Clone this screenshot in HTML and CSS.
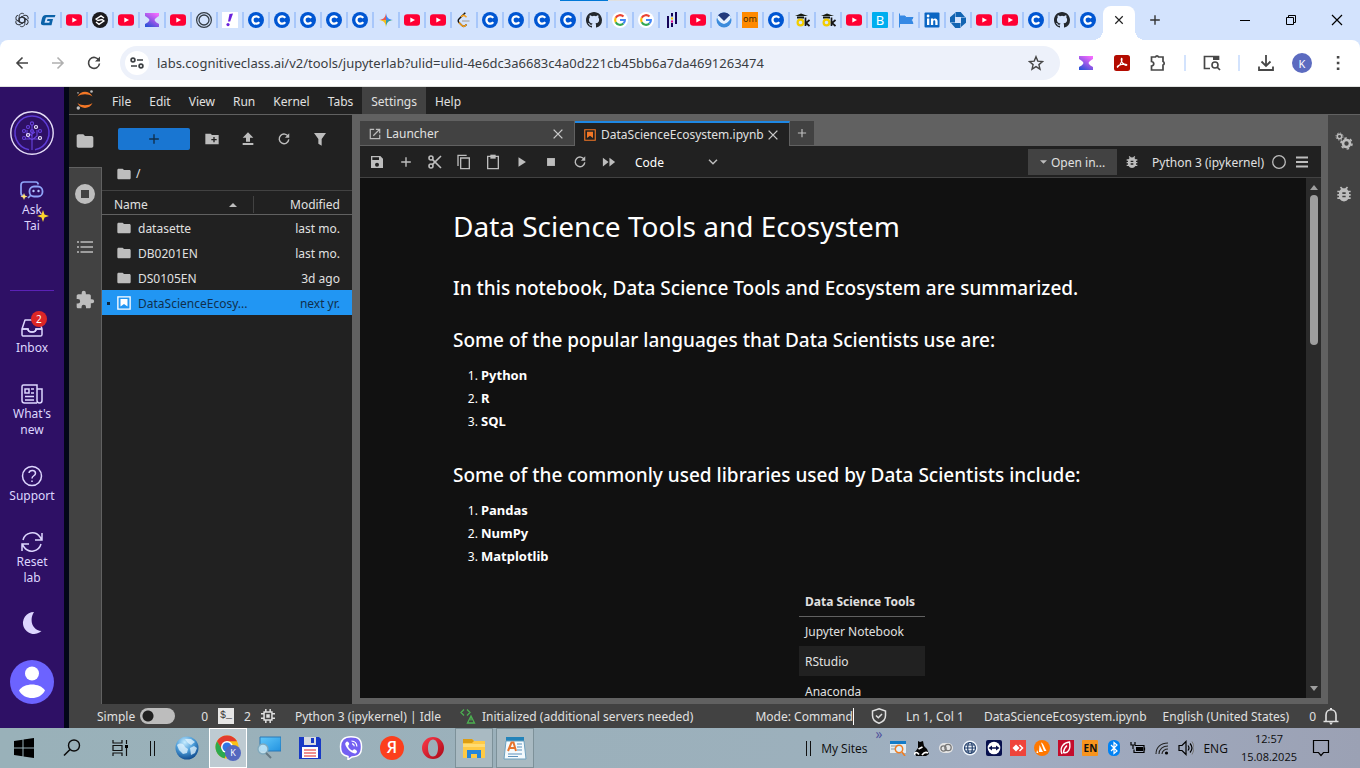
FILE: index.html
```html
<!DOCTYPE html>
<html lang="en">
<head>
<meta charset="utf-8">
<meta name="viewport" content="width=device-width, initial-scale=1">
<title>DataScienceEcosystem.ipynb - JupyterLab</title>
<link rel="stylesheet" href="styles.css">
</head>
<body>
<svg class="sprite" aria-hidden="true">
<defs>
<linearGradient id="hg" x1="0.8" y1="0" x2="0.2" y2="1"><stop offset="0" stop-color="#f66cff"/><stop offset=".5" stop-color="#9a58e8"/><stop offset="1" stop-color="#2b52d8"/></linearGradient>
<linearGradient id="sky" x1="0" y1="0" x2="1" y2="1"><stop offset="0" stop-color="#62c8fa"/><stop offset="1" stop-color="#2292e0"/></linearGradient>
<radialGradient id="globe" cx=".4" cy=".25" r=".8"><stop offset="0" stop-color="#c8edff"/><stop offset=".5" stop-color="#4a9bd8"/><stop offset="1" stop-color="#0b4488"/></radialGradient>
<linearGradient id="opera" x1="0" y1="0" x2="1" y2="1"><stop offset="0" stop-color="#ff3b4b"/><stop offset="1" stop-color="#a80716"/></linearGradient>
</defs>
<symbol id="openai" viewBox="0 0 16 16"><g fill="none" stroke="#30343b" stroke-width="1"><path id="petal" d="M5.200 9.600V4.200C5.200 1.500 8.500.3 10.200 2.300M5.200 6.300 8 4.700l3 1.700"/><use href="#petal" transform="rotate(60 8 8)"/><use href="#petal" transform="rotate(120 8 8)"/><use href="#petal" transform="rotate(180 8 8)"/><use href="#petal" transform="rotate(240 8 8)"/><use href="#petal" transform="rotate(300 8 8)"/></g></symbol>
<symbol id="gg" viewBox="0 0 16 16"><path d="M15.500 3H6C3.500 3 2.400 4.500 1.800 7L1 10.500c-.4 2 .5 2.700 2.500 2.700h8L13 7H7.500L7 9h2.700l-.4 1.800H4.500L5.700 6c.2-.5.4-.7 1-.7h8z" fill="#0b62a8"/></symbol>
<symbol id="yt" viewBox="0 0 16 16"><rect y="2.300" width="16" height="11.400" rx="3.200" fill="#ff0033"/><path d="M6.300 5.400v5.200L11 8z" fill="#fff"/></symbol>
<symbol id="ess" viewBox="0 0 16 16"><circle cx="8" cy="8" r="8" fill="#1c1b1e"/><path d="M12 6 9 3.800 4.200 7 6 8.500 10 7.500 11.800 9 7 12.300 4 10" fill="none" stroke="#fff" stroke-width="1.500"/></symbol>
<symbol id="hour" viewBox="0 0 16 16"><path d="M1 1h14v3c-1.500 1-4 2-4.500 4 .5 2 3 3 4.500 4v3H1v-3c1.500-1 4-2 4.500-4C5 6 2.500 5 1 4z" fill="url(#hg)"/></symbol>
<symbol id="ring" viewBox="0 0 16 16"><g fill="none" stroke="#333c45"><circle cx="8" cy="8" r="7.400" stroke-width="1.200"/><circle cx="8" cy="8" r="5" stroke-width="1.300"/></g></symbol>
<symbol id="bang" viewBox="0 0 16 16"><path d="M0 0h16v16H0z" fill="#fff"/><path d="m7.500 2 3.500-.5L8.200 9.500H6z" fill="#6b22dc"/><circle cx="6" cy="12.600" r="1.600" fill="#6b22dc"/></symbol>
<symbol id="cc" viewBox="0 0 16 16"><circle cx="8" cy="8" r="8" fill="#0056d2"/><path d="M11.200 5.900A3.700 3.700 0 1 0 11.200 10.100" fill="none" stroke="#fff" stroke-width="2.300"/></symbol>
<symbol id="gem" viewBox="0 0 16 16"><path d="M8 1c.5 4.500 2.500 6.500 7 7H8z" fill="#4285f4"/><path d="M8 1C7.500 5.500 5.500 7.500 1 8h7z" fill="#ea5a4d"/><path d="M1 8c4.500.5 6.500 2.500 7 7V8z" fill="#f4bc18"/><path d="M15 8c-4.500.5-6.500 2.500-7 7V8z" fill="#2ea779"/><path d="M8 2.500c.4 3.500 2 5 5.500 5.500-3.500.5-5.100 2-5.500 5z" fill="#4285f4" opacity=".5"/></symbol>
<symbol id="leet" viewBox="0 0 16 16"><path d="M9.300.8 3 7C2 8 2 9.500 3 10.500l3 3c1 1 2.500 1 3.500 0l1-1" fill="none" stroke="#151515" stroke-width="1.500"/><path d="m3 10.500 3 3c1 1 2.500 1 3.500 0l1-1M5 4.900l1-.8c1-.9 2.500-.8 3.500.2l1 1" fill="none" stroke="#f7a01b" stroke-width="1.500"/><path d="M6 9h7.500" stroke="#b3b3b3" stroke-width="1.500"/></symbol>
<symbol id="gh" viewBox="0 0 16 16"><path fill="#23282e" d="M8 0C3.580 0 0 3.580 0 8c0 3.540 2.290 6.530 5.470 7.590.4.070.55-.17.55-.38 0-.19-.01-.82-.01-1.490-2.010.37-2.530-.49-2.690-.94-.09-.23-.48-.94-.82-1.130-.28-.15-.68-.52-.01-.53.63-.01 1.080.58 1.230.82.720 1.210 1.870.87 2.330.66.070-.52.280-.87.510-1.070-1.780-.2-3.640-.89-3.640-3.950 0-.87.310-1.590.82-2.150-.08-.2-.36-1.020.08-2.120 0 0 .67-.21 2.200.82a7.420 7.420 0 0 1 4 0c1.530-1.040 2.200-.82 2.200-.82.440 1.100.16 1.920.08 2.120.51.560.82 1.270.82 2.150 0 3.070-1.870 3.750-3.650 3.950.29.250.54.730.54 1.480 0 1.070-.01 1.930-.01 2.200 0 .21.150.46.550.38A8 8 0 0 0 16 8c0-4.420-3.580-8-8-8z"/></symbol>
<symbol id="goog" viewBox="0 0 16 16"><circle cx="8" cy="8" r="8" fill="#fff"/><g fill="none" stroke-width="2.100"><path d="M11.500 4.500A4.900 4.900 0 0 0 3.700 5.800" stroke="#ea4335"/><path d="M3.700 5.800a4.900 4.900 0 0 0 0 4.400" stroke="#fbbc05"/><path d="M3.700 10.200a4.900 4.900 0 0 0 7.700 1.300" stroke="#34a853"/><path d="M11.300 11.600C12.500 10.500 13 9.500 12.900 8H8" stroke="#4285f4"/></g></symbol>
<symbol id="pandas" viewBox="0 0 16 16"><path d="M3 4h2v12H3zM7 1h2v3.500H7zm0 10h2v4H7zM11 0h2v12h-2z" fill="#150458"/><path d="M7 5.500h2v2H7z" fill="#ffca00"/><path d="M7 8.500h2v2H7z" fill="#e70488"/></symbol>
<symbol id="noaa" viewBox="0 0 16 16"><circle cx="8" cy="8" r="7.500" fill="#3c8cdc"/><path d="M2 3.500a7.500 7.500 0 0 1 12 0L8 10z" fill="#233a7c"/><path d="m1 5 1.500-1.500L8 9l5.500-5.500L15 5c-.5 3-3.500 6-7 7-3.500-1-6.500-4-7-7z" fill="#e7f2ff"/></symbol>
<symbol id="cap" viewBox="0 0 16 16"><path d="m1 4 6-2.500L14 4H1z" fill="#15190f"/><path d="M3 5.500h7" stroke="#15190f" stroke-width="2"/><circle cx="6.500" cy="10.500" r="2.900" fill="none" stroke="#f2cd00" stroke-width="2.200"/><path d="M11.500 5.500V14m4-6-3.500 3 3.500 3" fill="none" stroke="#161616" stroke-width="1.700"/></symbol>
<symbol id="flag" viewBox="0 0 16 16"><path d="M1.500 1.500v14M2 4h5l1 1.500h7L13.500 8l1.500 3.500H2z" fill="#3689e4" stroke="#3689e4"/></symbol>
<symbol id="linkedin" viewBox="0 0 16 16"><rect width="15" height="15" x=".5" y=".5" rx="1" fill="#0b66c3"/><path d="M3 6.500h2.300V13H3zm3.900 0h2.200v1c1-1.700 4.500-1.600 4.500 1.700V13h-2.300V9.500c0-1.600-2.100-1.500-2.100.1V13H6.900z" fill="#fff"/><circle cx="4.100" cy="4" r="1.400" fill="#fff"/></symbol>
<symbol id="chase" viewBox="0 0 16 16"><path d="M5.500 0h5.200l4.300 5H5.500zM16 5.500v5.200L11 15V5.500zM10.500 16H5.300L1 11h9.500zM0 10.500V5.300L5 1v9.500z" fill="#1264b2"/></symbol>
<symbol id="close" viewBox="0 0 16 16"><path d="m3 3 10 10M13 3 3 13" fill="none" stroke="currentColor" stroke-width="1.600"/></symbol>
<symbol id="plus" viewBox="0 0 16 16"><path d="M8 2.500v11M2.500 8h11" fill="none" stroke="currentColor" stroke-width="1.600"/></symbol>
<symbol id="back" viewBox="0 0 16 16"><path d="M14 8H3m5.500-5.500L3 8l5.500 5.500" fill="none" stroke="currentColor" stroke-width="1.600"/></symbol>
<symbol id="reload" viewBox="0 0 16 16"><path d="M13 5.500A5.500 5.500 0 1 0 13.500 8.500" fill="none" stroke="currentColor" stroke-width="1.600"/><path d="M14 1.500v5H9z" fill="currentColor"/></symbol>
<symbol id="folder" viewBox="0 0 24 24"><path d="M10 4H4c-1.100 0-2 .9-2 2v12c0 1.100.9 2 2 2h16c1.100 0 2-.9 2-2V8c0-1.100-.9-2-2-2h-8z" fill="currentColor"/></symbol>
<symbol id="bug" viewBox="0 0 24 24"><path fill="currentColor" d="M20 8h-2.810c-.45-.78-1.070-1.450-1.820-1.960L17 4.410 15.590 3l-2.170 2.170a6 6 0 0 0-2.830 0L8.410 3 7 4.410l1.620 1.630C7.880 6.550 7.260 7.220 6.810 8H4v2h2.090c-.05.330-.09.660-.09 1v1H4v2h2v1c0 .34.040.67.090 1H4v2h2.810a5.990 5.990 0 0 0 10.380 0H20v-2h-2.090c.050-.33.090-.66.090-1v-1h2v-2h-2v-1c0-.34-.04-.67-.09-1H20zm-6 8h-4v-2h4zm0-4h-4v-2h4z"/></symbol>
<symbol id="nbk" viewBox="0 0 16 16"><path d="M1 1h14v14H1z" fill="none" stroke="currentColor" stroke-width="1.500"/><path d="M4 3.500h8V12L8 9l-4 3z" fill="currentColor"/></symbol>
<symbol id="refresh2" viewBox="0 0 24 24"><path d="M3 10A9.500 9.500 0 0 1 20 7l2 3m0-7v7h-7M21 14A9.500 9.500 0 0 1 4 17l-2-3m0 7v-7h7" fill="none" stroke="currentColor" stroke-width="1.500"/></symbol>
<symbol id="mag" viewBox="0 0 20 20"><circle cx="12" cy="7.500" r="5.500" fill="none" stroke="currentColor" stroke-width="1.400"/><path d="m8 11.500-6 6" stroke="currentColor" stroke-width="1.600"/></symbol>
</svg>

<header class="browser">
  <div class="tabstrip">
    <div class="loadbar"></div>
    <nav class="tabs" aria-label="Browser tabs">
      <button class="tab" aria-label="ChatGPT"><svg><use href="#openai"/></svg></button>
      <button class="tab" aria-label="Tab"><svg><use href="#gg"/></svg></button>
      <button class="tab" aria-label="YouTube"><svg><use href="#yt"/></svg></button>
      <button class="tab" aria-label="Tab"><svg><use href="#ess"/></svg></button>
      <button class="tab" aria-label="YouTube"><svg><use href="#yt"/></svg></button>
      <button class="tab" aria-label="Tab"><svg><use href="#hour"/></svg></button>
      <button class="tab" aria-label="YouTube"><svg><use href="#yt"/></svg></button>
      <button class="tab" aria-label="Tab"><svg><use href="#ring"/></svg></button>
      <button class="tab" aria-label="Tab"><svg><use href="#bang"/></svg></button>
      <button class="tab" aria-label="Coursera"><svg><use href="#cc"/></svg></button>
      <button class="tab" aria-label="Coursera"><svg><use href="#cc"/></svg></button>
      <button class="tab" aria-label="Coursera"><svg><use href="#cc"/></svg></button>
      <button class="tab" aria-label="Coursera"><svg><use href="#cc"/></svg></button>
      <button class="tab" aria-label="Coursera"><svg><use href="#cc"/></svg></button>
      <button class="tab" aria-label="Gemini"><svg><use href="#gem"/></svg></button>
      <button class="tab" aria-label="YouTube"><svg><use href="#yt"/></svg></button>
      <button class="tab" aria-label="YouTube"><svg><use href="#yt"/></svg></button>
      <button class="tab" aria-label="LeetCode"><svg><use href="#leet"/></svg></button>
      <button class="tab" aria-label="Coursera"><svg><use href="#cc"/></svg></button>
      <button class="tab" aria-label="Coursera"><svg><use href="#cc"/></svg></button>
      <button class="tab" aria-label="Coursera"><svg><use href="#cc"/></svg></button>
      <button class="tab" aria-label="Coursera"><svg><use href="#cc"/></svg></button>
      <button class="tab" aria-label="GitHub"><svg><use href="#gh"/></svg></button>
      <button class="tab" aria-label="Google"><svg><use href="#goog"/></svg></button>
      <button class="tab" aria-label="Google"><svg><use href="#goog"/></svg></button>
      <button class="tab" aria-label="pandas"><svg><use href="#pandas"/></svg></button>
      <button class="tab" aria-label="YouTube"><svg><use href="#yt"/></svg></button>
      <button class="tab" aria-label="NOAA"><svg><use href="#noaa"/></svg></button>
      <button class="tab"><span class="fav fav-om">om</span></button>
      <button class="tab" aria-label="Coursera"><svg><use href="#cc"/></svg></button>
      <button class="tab" aria-label="Tab"><svg><use href="#cap"/></svg></button>
      <button class="tab" aria-label="Tab"><svg><use href="#cap"/></svg></button>
      <button class="tab" aria-label="YouTube"><svg><use href="#yt"/></svg></button>
      <button class="tab"><span class="fav fav-b">B</span></button>
      <button class="tab" aria-label="Tab"><svg><use href="#flag"/></svg></button>
      <button class="tab" aria-label="LinkedIn"><svg><use href="#linkedin"/></svg></button>
      <button class="tab" aria-label="Chase"><svg><use href="#chase"/></svg></button>
      <button class="tab" aria-label="YouTube"><svg><use href="#yt"/></svg></button>
      <button class="tab" aria-label="YouTube"><svg><use href="#yt"/></svg></button>
      <button class="tab" aria-label="Coursera"><svg><use href="#cc"/></svg></button>
      <button class="tab" aria-label="GitHub"><svg><use href="#gh"/></svg></button>
      <button class="tab tab-last" aria-label="Coursera"><svg><use href="#cc"/></svg></button>
    </nav>
    <button class="tab-active" aria-label="Close tab"><svg class="i12"><use href="#close"/></svg></button>
    <button class="newtab" aria-label="New tab"><svg class="i14"><use href="#plus"/></svg></button>
    <div class="winctl">
      <button aria-label="Minimize"><svg viewBox="0 0 12 12" class="i12"><path d="M1 6.500h10" stroke="#000"/></svg></button>
      <button aria-label="Restore"><svg viewBox="0 0 12 12" class="i12"><path d="M1.500 3.500h7v7h-7zM3.500 3.500v-2h7v7h-2" fill="none" stroke="#000"/></svg></button>
      <button aria-label="Close"><svg viewBox="0 0 12 12" class="i12"><path d="m1 1 10 10M11 1 1 11" stroke="#000" stroke-width="1.200"/></svg></button>
    </div>
  </div>
  <div class="toolbar">
    <div class="navbtns">
      <button aria-label="Back"><svg class="i16"><use href="#back"/></svg></button>
      <button class="dim flip" aria-label="Forward"><svg class="i16"><use href="#back"/></svg></button>
      <button aria-label="Reload"><svg class="i16"><use href="#reload"/></svg></button>
    </div>
    <div class="omnibox">
      <button class="siteinfo" aria-label="Site information"><svg viewBox="0 0 16 16" class="i16"><g fill="none" stroke="#3c4043" stroke-width="1.700"><circle cx="4" cy="5" r="1.900"/><path d="M8 5h6M2 11h6"/><circle cx="12" cy="11" r="1.900"/></g></svg></button>
      <input class="url" type="text" aria-label="Address" value="labs.cognitiveclass.ai/v2/tools/jupyterlab?ulid=ulid-4e6dc3a6683c4a0d221cb45bb6a7da4691263474">
      <button class="star" aria-label="Bookmark"><svg viewBox="0 0 16 16" class="i16"><path d="m8 1.700 1.800 4.400 4.700.4-3.600 3.100 1.100 4.600L8 11.700l-4 2.500 1.100-4.600L1.500 6.500l4.700-.4z" fill="none" stroke="#474747" stroke-width="1.400"/></svg></button>
    </div>
    <div class="exts">
      <button aria-label="Extension"><svg class="i16"><use href="#hour"/></svg></button>
      <button aria-label="Acrobat"><svg viewBox="0 0 16 16" class="i16"><rect width="16" height="16" rx="2.500" fill="#b30b00"/><path d="M7.500 3.200c1.500 0-.2 6-4 9-1.300-1 3-3.400 8.200-3 2.700.3.300 2.400-2-.2-1.800-1.700-2.800-4.500-2.200-5.800z" fill="none" stroke="#fff" stroke-width="1.100"/></svg></button>
      <button aria-label="Extensions"><svg viewBox="0 0 18 18" class="i18"><path d="M2.500 3h4c.5-1.500 2.500-1.500 3 0H14v4.500c1.600.5 1.600 3 0 3.500v5H2.500v-4c3-.5 3-4 0-4.500z" fill="none" stroke="#474747" stroke-width="1.700"/></svg></button>
      <i class="vline"></i>
      <button aria-label="Search page"><svg viewBox="0 0 18 18" class="i18"><path d="M7 14.500H1.500v-12h14V6" fill="none" stroke="#474747" stroke-width="1.700"/><path d="M10 2h6v4h-6z" fill="#474747"/><circle cx="12" cy="11" r="3" fill="none" stroke="#474747" stroke-width="1.600"/><path d="m14 13 3 3" stroke="#474747" stroke-width="1.700"/></svg></button>
      <i class="vline"></i>
      <button aria-label="Downloads"><svg viewBox="0 0 18 18" class="i18"><path d="M9 1v11M4.500 7.500 9 12l4.500-4.500M2 12.500V16h14v-3.500" fill="none" stroke="#474747" stroke-width="1.800"/></svg></button>
      <button class="profile">K</button>
      <button class="kebab" aria-label="Menu"><svg viewBox="0 0 4 16" class="dots"><path d="M.8 1h2.600v2.600H.8zM.8 6.700h2.600v2.600H.8zM.8 12.400h2.600V15H.8z" fill="#474747"/></svg></button>
    </div>
  </div>
</header>

<main class="page">
  <nav class="rail" aria-label="Lab navigation">
    <a href="#" class="logo" aria-label="Home"><svg viewBox="0 0 44 44" class="i44"><g fill="none"><circle cx="22" cy="22" r="21.200" stroke="#e6def8" stroke-width="1.400"/><path d="M19 38.700a17 17 0 1 1 6 0" stroke="#5d3bd6" stroke-width="1.500"/><g stroke="#6842df" stroke-width="1.100"><path d="M22 39V14M22 29l-5-4v-6M22 29l5-4v-6M22 25l-3-3M22 23l3-2M20 28h-5M24 28h5"/><circle cx="22" cy="12.500" r="1.600"/><circle cx="18" cy="16" r="1.500"/><circle cx="14" cy="20" r="1.500"/><circle cx="30" cy="20" r="1.500"/><circle cx="14" cy="27" r="1.500"/><circle cx="22" cy="20" r="1.500"/></g><g stroke="#eee7ff" stroke-width="1.200"><circle cx="26" cy="16" r="1.500"/><circle cx="18" cy="24" r="1.500"/><circle cx="30" cy="27" r="1.500"/></g></g></svg></a>
    <a href="#" class="rail-item ask"><svg viewBox="0 0 24 20" class="tai"><path d="M3 15.500c-1.500 0-2-1-2-2.500V5c0-2 1-3 3-3h12c1.500 0 2 .8 2.300 2.500M8 18l3-3" fill="none" stroke="#8fa4f8" stroke-width="1.700"/><rect x="9.500" y="6.500" width="13" height="10" rx="4.500" fill="none" stroke="#8fa4f8" stroke-width="1.800"/><circle cx="13.500" cy="11" r="1.200" fill="#b9c7ff"/><circle cx="18.500" cy="11" r="1.200" fill="#b9c7ff"/><path d="m4 13 1 2.500 2.500 1-2.500 1-1 2.500-1-2.500-2.500-1L3 15.500z" fill="#ffe478"/></svg><span>Ask<br>Tai</span><svg viewBox="0 0 12 12" class="spark"><path d="m6 0 1.500 4.500L12 6 7.500 7.500 6 12 4.500 7.500 0 6l4.500-1.500z" fill="#fcd62b"/></svg></a>
    <hr class="rail-rule">
    <a href="#" class="rail-item"><svg viewBox="0 0 24 24" class="i24"><path d="M2 13 5 4h14l3 9v5.500c0 1-.6 1.600-1.600 1.600H3.600c-1 0-1.600-.6-1.600-1.600zh6c0 4 8 4 8 0h6" fill="none" stroke="currentColor" stroke-width="1.500" stroke-linejoin="round"/><path d="M2 13h6c0 4 8 4 8 0h6" fill="none" stroke="currentColor" stroke-width="1.500"/></svg><span>Inbox</span><b class="badge">2</b></a>
    <a href="#" class="rail-item"><svg viewBox="0 0 24 24" class="i24"><path d="M17 21H4.500C3 21 2 20 2 18.500v-14C2 3.600 2.600 3 3.500 3H17v15.500c0 1.600.8 2.500 2.500 2.500S22 20 22 18.500V7h-5M5 7h4v4H5zM11 7h3m-3 4h3m-9 3.500h9M5 18h9" fill="none" stroke="currentColor" stroke-width="1.500"/></svg><span>What's<br>new</span></a>
    <a href="#" class="rail-item"><svg viewBox="0 0 24 24" class="i24"><g fill="none" stroke="currentColor" stroke-width="1.500"><circle cx="12" cy="12" r="9.500"/><path d="M9 9c.5-3.500 6.500-3.300 6.500.2C15.500 12 12 11.500 12 14.500"/><path d="M12 16.500V18"/></g></svg><span>Support</span></a>
    <a href="#" class="rail-item"><svg class="i24"><use href="#refresh2"/></svg><span>Reset<br>lab</span></a>
    <button class="moon" aria-label="Dark mode"><svg viewBox="0 0 20 22" class="moonpic"><path d="M12 0a11 11 0 1 0 7.500 19C11 18.500 6.500 9 12 0z" fill="#ddd6fe"/></svg></button>
    <button class="avatar" aria-label="Account"><svg viewBox="0 0 44 44" class="i44"><circle cx="22" cy="22" r="22" fill="#6c63ff"/><circle cx="22" cy="13.500" r="7" fill="#fff"/><path d="M9 30.500c5-8 21-8 26 0-5 10-21 10-26 0z" fill="#fff"/></svg></button>
  </nav>

  <section class="lab">
    <nav class="menubar" aria-label="Main menu">
      <svg viewBox="0 0 18 20" class="jup"><path d="M1.500 6.500c3-6.500 12-6.500 15 0-4-3-11-3-15 0zM1.500 13c4 3 11 3 15 0-3 6.500-12 6.500-15 0z" fill="#f37726"/><circle cx="2.300" cy="18" r="1.700" fill="#bdbdbd"/><circle cx="15.500" cy="1.500" r="1.300" fill="#bdbdbd"/><circle cx="2" cy="2.800" r=".9" fill="#9e9e9e"/></svg>
      <button>File</button><button>Edit</button><button>View</button><button>Run</button><button>Kernel</button><button>Tabs</button><button class="on">Settings</button><button>Help</button>
    </nav>
    <div class="work">
      <div class="side side-left">
        <button class="on" aria-label="File browser"><svg class="i20"><use href="#folder"/></svg></button>
        <button aria-label="Running terminals and kernels"><svg viewBox="0 0 20 20" class="i20"><path d="M10 0a10 10 0 1 0 0 20 10 10 0 0 0 0-20zM6 6h8v8H6z" fill="currentColor" fill-rule="evenodd"/></svg></button>
        <button aria-label="Table of contents"><svg viewBox="0 0 20 20" class="i20"><path d="M5.500 5H18M5.500 10H18M5.500 15H18M2 5h2m-2 5h2m-2 5h2" stroke="currentColor" stroke-width="1.600"/></svg></button>
        <button aria-label="Extension manager"><svg viewBox="0 0 24 24" class="i20"><path fill="currentColor" d="M20.500 11H19V7c0-1.100-.9-2-2-2h-4V3.500a2.500 2.500 0 0 0-5 0V5H4c-1.100 0-2 .9-2 2v3.800h1.500a2.700 2.700 0 0 1 0 5.400H2V20c0 1.100.9 2 2 2h3.800v-1.500a2.700 2.700 0 0 1 5.400 0V22H17c1.100 0 2-.9 2-2v-4h1.500a2.500 2.500 0 0 0 0-5z"/></svg></button>
      </div>

      <aside class="files">
        <div class="file-tools">
          <button class="launch" aria-label="New launcher"><svg class="i14"><use href="#plus"/></svg></button>
          <button aria-label="New folder"><svg viewBox="0 0 24 24" class="i16"><path fill="currentColor" fill-rule="evenodd" d="M22 6H12l-2-2H2v16h20zM14 9h2v3h3v2h-3v3h-2v-3h-3v-2h3z"/></svg></button>
          <button aria-label="Upload"><svg viewBox="0 0 24 24" class="i16"><path d="M9 16h6v-6h5l-8-8-8 8h5zM4 18h16v3H4z" fill="currentColor"/></svg></button>
          <button aria-label="Refresh"><svg class="i14"><use href="#reload"/></svg></button>
          <button aria-label="Filter"><svg viewBox="0 0 24 24" class="i16"><path d="M3 3h18l-6.500 9v10l-5-3v-7z" fill="currentColor"/></svg></button>
        </div>
        <div class="crumbs"><svg class="i16"><use href="#folder"/></svg><a href="#">/</a></div>
        <table class="listing">
          <thead><tr><th><div class="name-head">Name<svg viewBox="0 0 8 4" class="caret"><path d="M0 4h8L4 0z" fill="#bdbdbd"/></svg></div></th><th class="mod">Modified</th></tr></thead>
          <tbody>
            <tr><td><div class="fname"><svg class="i16"><use href="#folder"/></svg>datasette</div></td><td class="mod">last mo.</td></tr>
            <tr><td><div class="fname"><svg class="i16"><use href="#folder"/></svg>DB0201EN</div></td><td class="mod">last mo.</td></tr>
            <tr><td><div class="fname"><svg class="i16"><use href="#folder"/></svg>DS0105EN</div></td><td class="mod">3d ago</td></tr>
            <tr class="sel"><td><div class="fname"><i class="dot"></i><svg class="i14 nbwhite"><use href="#nbk"/></svg>DataScienceEcosy...</div></td><td class="mod">next yr.</td></tr>
          </tbody>
        </table>
      </aside>

      <section class="dock">
        <div class="docktabs">
          <div class="dtab"><svg viewBox="0 0 14 14" class="i12"><path d="M6 1.500H1.500v11h11V8M8 1.500h4.500V6M12.500 1.500 5 9" fill="none" stroke="#bdbdbd" stroke-width="1.400"/></svg><span>Launcher</span><button aria-label="Close Launcher"><svg class="i14"><use href="#close"/></svg></button></div>
          <div class="dtab cur"><svg class="i12 orange"><use href="#nbk"/></svg><span>DataScienceEcosystem.ipynb</span><button aria-label="Close notebook"><svg class="i14"><use href="#close"/></svg></button></div>
          <button class="addtab" aria-label="New tab"><svg class="i12"><use href="#plus"/></svg></button>
        </div>
        <div class="nbtools">
          <button aria-label="Save"><svg viewBox="0 0 24 24" class="i16"><path fill="currentColor" fill-rule="evenodd" d="M17 3H3v18h18V7zM5 5h10v4H5zm7 8a3 3 0 1 1 0 6 3 3 0 0 1 0-6z"/></svg></button>
          <button aria-label="Insert cell"><svg class="i14"><use href="#plus"/></svg></button>
          <button aria-label="Cut"><svg viewBox="0 0 24 24" class="i16"><g fill="none" stroke="currentColor" stroke-width="2.400"><circle cx="6" cy="6" r="3"/><circle cx="6" cy="18" r="3"/><path d="m8 8 13 13M8 16 21 3"/></g></svg></button>
          <button aria-label="Copy"><svg viewBox="0 0 24 24" class="i16"><path d="M16 2H3v16M7 6h13v16H7z" fill="none" stroke="currentColor" stroke-width="2"/></svg></button>
          <button aria-label="Paste"><svg viewBox="0 0 24 24" class="i16"><path d="M4 3.500h16V22H4z" fill="none" stroke="currentColor" stroke-width="2"/><path d="M8 1h8v6H8z" fill="currentColor"/></svg></button>
          <button aria-label="Run"><svg viewBox="0 0 16 16" class="i14"><path d="M4 2.500v11L12.500 8z" fill="currentColor"/></svg></button>
          <button aria-label="Stop"><svg viewBox="0 0 16 16" class="i14"><path d="M3.500 3.500h9v9h-9z" fill="currentColor"/></svg></button>
          <button aria-label="Restart"><svg class="i14"><use href="#reload"/></svg></button>
          <button aria-label="Restart and run all"><svg viewBox="0 0 16 16" class="i14"><path d="M1 3v10l6.500-5zm7.500 0v10L15 8z" fill="currentColor"/></svg></button>
          <div class="cellkind"><select aria-label="Cell type"><option>Code</option><option>Markdown</option></select><svg viewBox="0 0 10 6" class="chev"><path d="m1 .8 4 4 4-4" fill="none" stroke="#bdbdbd" stroke-width="1.500"/></svg></div>
          <span class="grow"></span>
          <button class="openin"><svg viewBox="0 0 8 4" class="tri"><path d="M0 0h8L4 4z" fill="#bdbdbd"/></svg>Open in...</button>
          <button aria-label="Debugger"><svg class="i16"><use href="#bug"/></svg></button>
          <button class="kernel">Python 3 (ipykernel)</button>
          <button class="kstate" aria-label="Kernel status"><svg viewBox="0 0 14 14" class="i14"><circle cx="7" cy="7" r="6.300" fill="none" stroke="currentColor" stroke-width="1.300"/></svg></button>
          <button class="burger" aria-label="More"><svg viewBox="0 0 12 12" class="i12"><path d="M0 1.500h12M0 6h12M0 10.500h12" stroke="currentColor" stroke-width="2.200"/></svg></button>
        </div>
        <div class="nb">
          <article class="doc">
            <h1>Data Science Tools and Ecosystem</h1>
            <h3 class="intro">In this notebook, Data Science Tools and Ecosystem are summarized.</h3>
            <h3>Some of the popular languages that Data Scientists use are:</h3>
            <ol><li><b>Python</b></li><li><b>R</b></li><li><b>SQL</b></li></ol>
            <h3 class="libs">Some of the commonly used libraries used by Data Scientists include:</h3>
            <ol><li><b>Pandas</b></li><li><b>NumPy</b></li><li><b>Matplotlib</b></li></ol>
            <table class="dst">
              <thead><tr><th>Data Science Tools</th></tr></thead>
              <tbody><tr><td>Jupyter Notebook</td></tr><tr><td>RStudio</td></tr><tr><td>Anaconda</td></tr></tbody>
            </table>
          </article>
          <div class="scroll"><svg viewBox="0 0 8 5" class="sarrow"><path d="M0 5h8L4 0z" fill="#9e9e9e"/></svg><i class="thumb"></i><svg viewBox="0 0 8 5" class="sarrow end"><path d="M0 0h8L4 5z" fill="#9e9e9e"/></svg></div>
        </div>
      </section>

      <div class="side side-right">
        <button aria-label="Property inspector"><svg viewBox="0 0 18 18" class="i18"><g fill="none" stroke="currentColor"><circle cx="4.500" cy="4.500" r="2.200" stroke-width="1.500"/><circle cx="4.500" cy="4.500" r="3.500" stroke-width="1" stroke-dasharray="1.400 1.350"/><circle cx="11.500" cy="11.500" r="3.500" stroke-width="2.600"/><circle cx="11.500" cy="11.500" r="5.500" stroke-width="1.600" stroke-dasharray="2.500 3.260"/></g></svg></button>
        <button aria-label="Debugger panel"><svg class="i20"><use href="#bug"/></svg></button>
      </div>
    </div>
    <footer class="status">
      <label class="simple">Simple<input type="checkbox" role="switch"></label>
      <button class="terms">0<span class="term">$_</span>2<svg viewBox="0 0 16 16" class="i14"><path d="M3.500 3.500h9v9h-9zM5.500 0v3M10.500 0v3M5.500 13v3M10.500 13v3M0 5.500h3M0 10.500h3M13 5.500h3M13 10.500h3" fill="none" stroke="#e0e0e0" stroke-width="1.700"/><path d="M6 6h4v4H6z" fill="#e0e0e0"/></svg></button>
      <button class="kidle">Python 3 (ipykernel) | Idle</button>
      <span class="lsp"><svg viewBox="0 0 16 16" class="i16"><path d="M4 1.500 1 4.500l3 3M7 1.500l3 3-3 3M7.500 15 11 8l3.500 7zM11 10.500v2" fill="none" stroke="#4caf50" stroke-width="1.300"/></svg>Initialized (additional servers needed)</span>
      <span class="grow"></span>
      <span class="mode">Mode: Command</span>
      <svg viewBox="0 0 16 16" class="i16 shield"><path d="M8 .8 14.500 3v4.500c0 3.500-2.500 6.500-6.500 7.700C4 14 1.500 11 1.500 7.500V3z" fill="none" stroke="#e0e0e0" stroke-width="1.500"/><path d="m5 7.500 2.300 2.300L11 6" fill="none" stroke="#e0e0e0" stroke-width="1.500"/></svg>
      <button class="cursor">Ln 1, Col 1</button>
      <span>DataScienceEcosystem.ipynb</span>
      <button>English (United States)</button>
      <button class="bell">0<svg viewBox="0 0 18 18" class="i18"><path d="M1.500 14.500h15M4 14V8c0-7 10-7 10 0v6" fill="none" stroke="#e0e0e0" stroke-width="1.600"/><path d="M7 15.500h4L9 18zM8 1h2v2H8z" fill="#e0e0e0"/></svg></button>
    </footer>
  </section>
</main>

<footer class="taskbar">
  <div class="tb-main">
    <button aria-label="Start"><svg viewBox="0 0 20 20" class="i20"><path d="M0 3l8.500-1.200v7.700H0zM9.500 1.600 20 0v9.500H9.500zM0 10.500h8.500v7.700L0 17zM9.500 10.500H20V20L9.500 18.400z"/></svg></button>
    <button aria-label="Search"><svg class="i20"><use href="#mag"/></svg></button>
    <button aria-label="Task view"><svg viewBox="0 0 18 18" class="i18"><path d="M2 1v3h9V1M2 17v-3h9v3M2 6.500h9v5H2zM15.500 1v4M15.500 9v8" fill="none" stroke="#111" stroke-width="1.200"/><path d="M14 6h3v3h-3z"/></svg></button>
    <i class="bars"></i>
  </div>
  <div class="tb-apps">
    <button aria-label="Browser"><svg viewBox="0 0 24 24" class="i24"><circle cx="12" cy="12" r="11.500" fill="url(#globe)"/><path d="M2 9c4-3 7-1 8 2l3 2-1 4-4 1-4-4zM10 3l6 0 4 3-4 3-3-2zM15 12l4-2 3 2-2 5-4 2z" fill="#e6f6ff" opacity=".75"/></svg></button>
    <button class="open active" aria-label="Chrome"><svg viewBox="0 0 26 26" class="i26"><circle cx="12" cy="12" r="11.500" fill="#fbc116"/><path d="M2 6.300A11.500 11.500 0 0 1 22 6.300H12L7 15z" fill="#e33b2e"/><path d="M2 6.300 7.500 15l5 2-3 6.300A11.500 11.500 0 0 1 2 6.300z" fill="#2da94f"/><circle cx="12" cy="12" r="6" fill="#fff"/><circle cx="12" cy="12" r="4.500" fill="#3275e4"/></svg><span class="kbadge">K</span></button>
    <button aria-label="Remote desktop"><svg viewBox="0 0 24 24" class="i24"><path d="M3 1h21v14H3z" fill="url(#sky)" stroke="#2b79b5"/><circle cx="6" cy="13" r="5" fill="#c9e7f5" fill-opacity=".85" stroke="#7fa9bd" stroke-width="1.300"/><path d="m9 17 5 5" stroke="#657983" stroke-width="2"/></svg></button>
    <button aria-label="Total Commander"><svg viewBox="0 0 24 24" class="i24"><path d="M1 1h20l2 2v20H1z" fill="#1839c5"/><path d="M6 1h12v8H6z" fill="#d7dbe2"/><path d="M13 2h3v5h-3z" fill="#1839c5"/><path d="M4 11h16v11H4z" fill="#fff"/><path d="M6 14h12M6 17h12M6 20h12" stroke="#df2121"/></svg></button>
    <button aria-label="Viber"><svg viewBox="0 0 24 24" class="i24"><path d="M12 .8c8 0 10.500 3 10.500 10S20 20.500 13 21l-4 2.700V20.500C3 19 1.500 16.500 1.500 10.800S4 .8 12 .8z" fill="#7360f2" stroke="#fff" stroke-width="1.500"/><path d="M8.300 5.500c1.200.5 2.200 2 1.900 2.800-.3.700-1.200 1-1 1.900.5 2 2.200 3.600 4 4.200.9.200 1.200-1.200 2-1.200 1 .1 2.700 1.400 2.800 2.200 0 .9-1.300 2.100-2.300 2.100C11.500 16.600 7 12 6.200 8c-.1-1 1.200-2.600 2.100-2.500z" fill="#fff"/><path d="M12.500 5c3.300.2 5.200 2.200 5.400 5.500M13 7.700c1.400.2 2.200 1.100 2.300 2.600" fill="none" stroke="#fff" stroke-width="1.200"/></svg></button>
    <button><span class="yandex">Я</span></button>
    <button aria-label="Opera"><svg viewBox="0 0 24 24" class="i24"><path fill="url(#opera)" fill-rule="evenodd" d="M12 1a11 11 0 1 0 0 22 11 11 0 0 0 0-22zm0 2.500c3 0 5 3.500 5 8.500s-2 8.500-5 8.500S7 17 7 12s2-8.500 5-8.500z"/></svg></button>
    <button class="open" aria-label="File Explorer"><svg viewBox="0 0 24 24" class="i24"><path d="M1 3h9l2 2h11v17H1z" fill="#ffca45"/><path d="M1 3h9l2 2-2 2H1z" fill="#dd9d12"/><path d="M5 22v-8h14v8h-4v-4H9v4z" fill="#2686dc"/><path d="M1 8h22v3H1z" fill="#ffdc74"/></svg></button>
    <button class="open" aria-label="WordPad"><svg viewBox="0 0 24 24" class="i24"><path d="M3 1h18v5H3z" fill="#2383b9"/><path d="M3 5h18l2 18H1z" fill="#f4fafd" stroke="#6fa1bf"/><path d="M5 15 8.500 6.500h2L13 15M6.500 12h5" fill="none" stroke="#e8742c" stroke-width="2"/><path d="M14 8h5M14 11h5M14 14h5M5 18h14M5 20.500h10" stroke="#5d92bd"/></svg></button>
  </div>
  <span class="grow"></span>
  <div class="sites"><i class="bars"></i><span>My Sites</span><span class="more">»</span></div>
  <div class="tray">
    <button aria-label="Search tool"><svg viewBox="0 0 16 16" class="i16"><path d="M0 1h16v12H0z" fill="#e4ebef"/><path d="M0 1h16v3H0z" fill="#157bc7"/><path d="M1 6h7M1 9h5" stroke="#8999a4"/><circle cx="9" cy="9" r="3.700" fill="#dff1ff" stroke="#ee7d23" stroke-width="1.500"/><path d="m12 12 3 4" stroke="#ee7d23" stroke-width="1.600"/></svg></button>
    <button aria-label="Tray app"><svg viewBox="0 0 16 16" class="i16"><path d="m4 1 2 1 3-1 1 5 3 3 2 5-3 2H2l-1-4 3-4z" fill="#050505"/><path d="M0 14.500q2-4 5 0M8 15q3-4 6-2M4.500 9l4-2" fill="none" stroke="#fff" stroke-width="1.700"/></svg></button>
    <button aria-label="Creative Cloud"><svg viewBox="0 0 16 16" class="i16"><rect x="1" y="3" width="14" height="10" rx="5" fill="#e5e5e5"/><g fill="none" stroke="#777" stroke-width="1.300"><circle cx="5.500" cy="8.500" r="2.600"/><circle cx="10" cy="7.500" r="3.200"/></g></svg></button>
    <button aria-label="Tray globe"><svg viewBox="0 0 16 16" class="i16"><circle cx="8" cy="8" r="7.500" fill="#f0f5fb"/><g fill="none" stroke="#24416d" stroke-width="1.200"><circle cx="8" cy="8" r="5.500"/><ellipse cx="8" cy="8" rx="2.300" ry="5.500"/><path d="M2.500 8h11M4 5h8M4 11h8"/></g></svg></button>
    <button aria-label="TeamViewer"><svg viewBox="0 0 16 16" class="i16"><rect width="16" height="16" rx="2" fill="#07104d"/><circle cx="8" cy="8" r="6.300" fill="#fff"/><path d="M2.500 8 6 5.500v1.700h4V5.500L13.500 8 10 10.500V8.800H6v1.700z" fill="#07104d"/></svg></button>
    <button aria-label="AnyDesk"><svg viewBox="0 0 16 16" class="i16"><path d="M0 0h16v16H0z" fill="#ef443b"/><path d="M6 4.500 9.500 8 6 11.500 2.500 8z" fill="#fff"/><path d="m9.500 5 3 3-3 3" fill="none" stroke="#fff" stroke-width="1.500"/></svg></button>
    <button aria-label="Avast"><svg viewBox="0 0 16 16" class="i16"><circle cx="8" cy="8" r="8" fill="#ff7800"/><path d="M7 2.500c2 0 3 4 5.500 8.500H10zM5.500 5l3.500 7H5zM3 10l1.500 3H2.500z" fill="#fff"/></svg></button>
    <button aria-label="Tray leaf"><svg viewBox="0 0 16 16" class="i16"><path d="M0 0h16v16H0z" fill="#c40c2c"/><path d="M4 14C1 7 6 2.500 11.500 2 13 9 10 14 5.500 12.500c0-3 1.500-5 3.500-7" fill="none" stroke="#fff" stroke-width="1.400"/></svg></button>
    <button><span class="en">EN</span></button>
    <button aria-label="Bluetooth"><svg viewBox="0 0 16 16" class="i16"><rect x="2" width="12" height="16" rx="5.500" fill="#0082f3"/><path d="m5 5 6 6-3 2.500v-11L11 5l-6 6" fill="none" stroke="#fff" stroke-width="1.200"/></svg></button>
    <button aria-label="Battery"><svg viewBox="0 0 16 16" class="i16"><path d="M5 5.500h9v7H4v-3M14.500 7.500v3M1 2v3h4V2M3 5v4" fill="none" stroke="#000" stroke-width="1.200"/><path d="M6 7h7v4H6z"/></svg></button>
    <button aria-label="Wi-Fi"><svg viewBox="0 0 16 16" class="i16"><path d="M2 14C2 7 7 3 14 3M5 14c0-5 4-8 9-8M8 14c0-3 3-5 6-5" fill="none" stroke="#222" stroke-width="1.100"/><circle cx="12.500" cy="13" r="1.600"/></svg></button>
    <button aria-label="Volume"><svg viewBox="0 0 16 16" class="i16"><path d="M1 5.500h3l4-4v13l-4-4H1zM10 5.500q2 2.500 0 5M12 3.500q4 4.500 0 9" fill="none" stroke="#000" stroke-width="1.200"/><path d="M14 1.500q4 6 0 13" fill="none" stroke="#777"/></svg></button>
  </div>
  <button class="lang">ENG</button>
  <button class="clock">12:57<br>15.08.2025</button>
  <button class="note" aria-label="Notifications"><svg viewBox="0 0 18 18" class="i18"><path d="M1.500 1.500h15v12h-5L9 16.500l-2.500-3h-5z" fill="none" stroke="#000" stroke-width="1.200"/></svg></button>
</footer>
</body>
</html>
```
FILE: styles.css
```css
* { box-sizing: border-box; }
html, body { margin: 0; height: 100%; }
body {
  display: flex;
  flex-direction: column;
  overflow: hidden;
  font-family: "Noto Sans", "Open Sans", sans-serif;
  font-size: 12px;
  background: #212121;
}
button, input, select { font: inherit; color: inherit; }
button {
  display: flex;
  align-items: center;
  justify-content: center;
  flex: none;
  padding: 0;
  border: 0;
  background: none;
  white-space: nowrap;
}
a { color: inherit; text-decoration: none; }
svg { display: block; flex: none; }
.sprite { position: absolute; width: 0; height: 0; }
.i12 { width: 12px; height: 12px; }
.i14 { width: 14px; height: 14px; }
.i16 { width: 16px; height: 16px; }
.i18 { width: 18px; height: 18px; }
.i20 { width: 20px; height: 20px; }
.i24 { width: 24px; height: 24px; }
.i26 { width: 26px; height: 26px; }
.i44 { width: 44px; height: 44px; }
.grow { flex: 1; }

/* Browser chrome */
.browser { flex: none; background: #d3e3fd; border-bottom: 1px solid #e1e3e1; }
.tabstrip { position: relative; display: flex; height: 40px; padding-left: 9px; }
.loadbar {
  position: absolute;
  top: 0;
  left: 560px;
  width: 242px;
  height: 1px;
  background: linear-gradient(to right, #0078d7 48px, #dfdfdf 48px);
}
.tabs { display: flex; align-items: center; }
.tab { position: relative; width: 26px; height: 20px; }
.tab svg { width: 16px; height: 16px; }
.tab::after {
  content: "";
  position: absolute;
  right: -1px;
  top: 2px;
  width: 2px;
  height: 16px;
  background: #a8c7fa;
}
.tab-last::after { display: none; }
.fav { width: 16px; height: 16px; line-height: 14px; text-align: center; }
.fav-om { background: #ff8a00; color: #3e2a05; font-size: 9px; }
.fav-b { background: #00aeef; color: #fff; font-size: 13px; line-height: 16px; border-radius: 1px; }
.tab-active {
  position: relative;
  width: 32px;
  height: 34px;
  margin: 6px 0 0 2px;
  padding-bottom: 6px;
  border-radius: 8px 8px 0 0;
  background: #fff;
  color: #222;
}
.tab-active::before, .tab-active::after {
  content: "";
  position: absolute;
  bottom: 0;
  left: -10px;
  width: 10px;
  height: 10px;
  background: radial-gradient(circle at 0 0, transparent 10px, #fff 10px);
}
.tab-active::after { left: 32px; background: radial-gradient(circle at 100% 0, transparent 10px, #fff 10px); }
.newtab { width: 40px; color: #333; }
.winctl { display: flex; margin-left: auto; }
.winctl button { width: 46px; }
.toolbar { display: flex; align-items: center; height: 46px; padding-right: 4px; background: #fff; border-radius: 8px 8px 0 0; }
.navbtns { display: flex; padding-left: 4px; width: 120px; color: #444; }
.navbtns button { width: 36px; height: 34px; }
.navbtns .dim { color: #b0b0b0; }
.navbtns .flip svg { transform: scaleX(-1); }
.omnibox {
  display: flex;
  align-items: center;
  flex: 1;
  height: 34px;
  padding: 0 16px 0 5px;
  border-radius: 17px;
  background: #edf1fa;
}
.siteinfo { width: 24px; height: 24px; border-radius: 50%; background: #fff; }
.url { flex: 1; min-width: 0; margin-left: 8px; padding: 0; border: 0; background: none; outline: 0; color: #3a3d42; font-size: 13px; }
.exts { display: flex; align-items: center; height: 34px; padding-left: 8px; }
.exts button { width: 36px; height: 34px; }
.exts .vline { width: 2px; height: 16px; margin: 0 8px; background: #d3e3fd; }
.exts .profile { width: 20px; height: 20px; margin: 0 8px; border-radius: 50%; background: #5c6bc0; color: #fff; font-size: 11px; }
.dots { width: 4px; height: 16px; }

/* Page */
.page { display: flex; flex: 1; min-height: 0; }
.rail {
  display: flex;
  flex-direction: column;
  align-items: center;
  flex: none;
  gap: 24px;
  width: 69px;
  padding-top: 24px;
  border-right: 5px solid #020617;
  background: #2e1065;
  color: #ddd6fe;
  line-height: 16px;
  text-align: center;
}
.rail-item { position: relative; display: flex; flex-direction: column; align-items: center; }
.rail-item .i24 { margin: 2px 0 0; }
.tai { width: 24px; height: 22px; margin-bottom: 1px; }
.ask { margin-bottom: 32px; }
.spark { position: absolute; right: -5px; top: 31px; width: 12px; height: 12px; }
.rail-rule { width: 44px; height: 1px; margin: 0 0 -1px; border: 0; background: #5b21b6; }
.badge {
  position: absolute;
  top: -3px;
  left: 15px;
  width: 16px;
  height: 16px;
  border-radius: 50%;
  background: #dc2626;
  color: #fff;
  font-size: 10px;
  font-weight: 400;
}
.moonpic { width: 20px; height: 22px; }
.moon { margin: 2px 0; }

/* JupyterLab shell */
.lab { display: flex; flex-direction: column; flex: 1; min-width: 0; color: #e0e0e0; }
.menubar { display: flex; flex: none; height: 28px; border-bottom: 1px solid #616161; background: #212121; }
.jup { width: 18px; height: 20px; margin: 3px 9px 0 7px; }
.menubar button { padding: 1px 9px 0; }
.menubar .on { background: #424242; }
.work { display: flex; flex: 1; min-height: 0; }
.side { flex: none; background: #424242; color: #bdbdbd; }
.side button { width: 100%; height: 53px; }
.side-left { width: 33px; border-right: 1px solid #616161; }
.side-left .on { width: 33px; height: 53px; padding-right: 1px; background: #212121; border-bottom: 1px solid #616161; }
.side-left button + button { padding-bottom: 2px; }
.side-right { width: 32px; }
.side-right button { padding-bottom: 2px; }
.files { flex: none; width: 250px; background: #212121; overflow: hidden; }
.file-tools { display: flex; align-items: center; height: 48px; padding-left: 16px; color: #bdbdbd; }
.file-tools button { width: 36px; height: 22px; }
.file-tools .launch { width: 72px; margin-right: 4px; border-radius: 2px; background: #1976d2; color: #10304d; }
.crumbs { display: flex; align-items: center; gap: 4px; height: 27px; padding: 0 14px 6px; }
.crumbs svg, .fname svg { color: #bdbdbd; }
.listing { width: 100%; border-collapse: collapse; border-top: 1px solid #424242; table-layout: fixed; font-size: 12px; }
.listing th { height: 24px; padding: 4px 0 0 12px; border-bottom: 1px solid #616161; font-weight: 400; text-align: left; }
.name-head { display: flex; align-items: center; justify-content: space-between; padding-right: 16px; border-right: 1px solid #424242; }
.caret { width: 8px; height: 4px; }
.listing td { height: 25px; padding: 2px 0 0; }
.listing th:first-child { width: 152px; }
.listing .mod { padding-right: 12px; text-align: right; }
.fname { position: relative; display: flex; align-items: center; gap: 6px; padding-left: 14px; white-space: nowrap; }
.sel { background: #2196f3; color: #10304d; }
.fname .nbwhite { color: #fff; margin: 0 1px; }
.dot { position: absolute; left: 5px; width: 3px; height: 3px; background: #0c2740; }

.dock { display: flex; flex-direction: column; flex: 1; min-width: 0; padding: 6px 7px 6px 8px; background: #616161; }
.docktabs { display: flex; flex: none; height: 25px; }
.dtab { display: flex; align-items: center; gap: 5px; width: 215px; padding: 1px 9px 0; border-right: 1px solid #616161; border-bottom: 1px solid #616161; background: #424242; }
.dtab span { flex: 1; min-width: 0; overflow: hidden; white-space: nowrap; }
.dtab button { color: #c8c8c8; }
.dtab.cur { padding-top: 0; border-top: 2px solid #1e88e5; border-bottom: 0; background: #212121; }
.dtab.cur button { margin-left: -4px; }
.orange { color: #f37726; }
.addtab { width: 24px; height: 24px; background: #424242; color: #bdbdbd; }
.nbtools { display: flex; align-items: center; flex: none; height: 32px; padding: 1px 9px 0 2px; border-bottom: 1px solid #424242; background: #212121; color: #bdbdbd; }
.nbtools button { width: 29px; height: 26px; }
.cellkind { display: flex; align-items: center; width: 83px; margin-left: 12px; }
.cellkind select { flex: 1; min-width: 0; padding: 0; border: 0; appearance: none; background: none; color: #fff; outline: 0; }
.chev { width: 10px; height: 6px; }
.nbtools .openin { gap: 4px; width: 89px; background: #424242; color: #e0e0e0; }
.tri { width: 7px; height: 4px; }
.nbtools .kernel { width: auto; margin: 0 8px 0 6px; color: #e0e0e0; }
.nbtools .kstate { width: 14px; margin-right: 10px; }
.nbtools .burger { width: 12px; margin-right: 4px; }
.nb { display: flex; flex: 1; min-height: 0; background: #111; }
.doc { flex: 1; min-width: 0; padding: 28px 35px 0 93px; overflow: hidden; color: #fff; font-size: 13px; }
.doc h1, .doc h3 { margin: 0; font-weight: 500; }
.doc h1 { font-size: 28px; font-weight: 400; line-height: 40px; }
.doc h3 { font-size: 19px; line-height: 28px; margin-top: 24px; }
.doc .intro { margin-top: 28px; }
.doc .libs { margin-top: 28px; }
.doc ol { margin: 10px 0 0; padding-left: 28px; line-height: 23px; font-size: 12px; }
.doc b { font-size: 13px; }
.dst { margin: 19px auto 0; border-collapse: collapse; font-size: 12px; color: #e0e0e0; }
.dst th, .dst td { height: 30px; padding: 1px 10px 0 6px; text-align: left; }
.dst th { height: 29px; border-bottom: 1px solid #616161; }
.dst tbody tr:nth-child(even) { background: #212121; }
.scroll { display: flex; flex-direction: column; align-items: center; flex: none; width: 15px; padding: 7px 0; background: #2b2b2b; }
.sarrow { width: 8px; height: 5px; }
.thumb { width: 8px; height: 150px; margin-top: 5px; border-radius: 4px; background: #9e9e9e; }
.end { margin-top: auto; }

.status { display: flex; align-items: center; flex: none; gap: 16px; height: 24px; padding: 0 20px 0 28px; background: #424242; white-space: nowrap; }
.simple { display: flex; align-items: center; gap: 5px; }
.simple input { appearance: none; width: 35px; height: 16px; margin: 0; border-radius: 8px; background: radial-gradient(circle at 8px 8px, #212121 5px, #bdbdbd 6px); }
.terms { gap: 10px; margin: 0 4px 0 10px; }
.term { width: 16px; height: 16px; background: #e6e6e6; color: #333; font: 10px/16px "Liberation Mono", monospace; }
.lsp { display: flex; align-items: center; gap: 6px; margin-left: 3px; }
.mode { border-right: 1px solid #fff; }
.shield { margin: 0 3px 0 1px; }
.cursor { margin-right: 4px; }
.bell { gap: 6px; margin-left: 4px; }

/* Windows taskbar */
.taskbar { display: flex; align-items: center; flex: none; height: 40px; padding-right: 30px; background: linear-gradient(to right, #99b1b9, #9cb0bc 60%, #a1adc2 72%, #9ba1b4); color: #0c0c0c; font-family: "Open Sans", "Noto Sans", sans-serif; }
.tb-main, .tb-apps, .sites, .tray { display: flex; align-items: center; flex: none; height: 40px; }
.tb-main button { width: 48px; height: 40px; }
.bars { width: 5px; height: 15px; border: solid #111; border-width: 0 1px; }
.tb-main .bars { margin: 0 13px 0 6px; }
.tb-apps { gap: 3px; }
.tb-apps button { position: relative; width: 38px; height: 40px; }
.tb-apps .open { border: 1px solid #c2ced4; background: #a9bac2; outline: 1px solid #7d9199; outline-offset: -1px; }
.tb-apps .active { border: 1px solid #fff; background: #becbd2; outline: 0; }
.kbadge { position: absolute; right: 5px; bottom: 6px; width: 16px; height: 16px; border-radius: 50%; background: #5468bf; color: #fff; font-size: 9px; line-height: 16px; }
.yandex { width: 24px; height: 24px; border-radius: 50%; background: #fc3f1d; color: #fff; font-size: 16px; font-weight: 600; line-height: 23px; }
.sites { gap: 10px; position: relative; margin-right: 19px; }
.more { position: absolute; right: -15px; top: -4px; color: #4f4f9c; font-size: 14px; }
.tray button { width: 24px; height: 40px; }
.en { width: 16px; height: 16px; border-radius: 1px; background: #f7941d; color: #111; font-size: 10px; font-weight: 700; line-height: 16px; }
.lang { margin-left: 5px; }
.clock { margin: 0 15px 0 13px; font-size: 11px; line-height: 18px; text-align: center; }
```
